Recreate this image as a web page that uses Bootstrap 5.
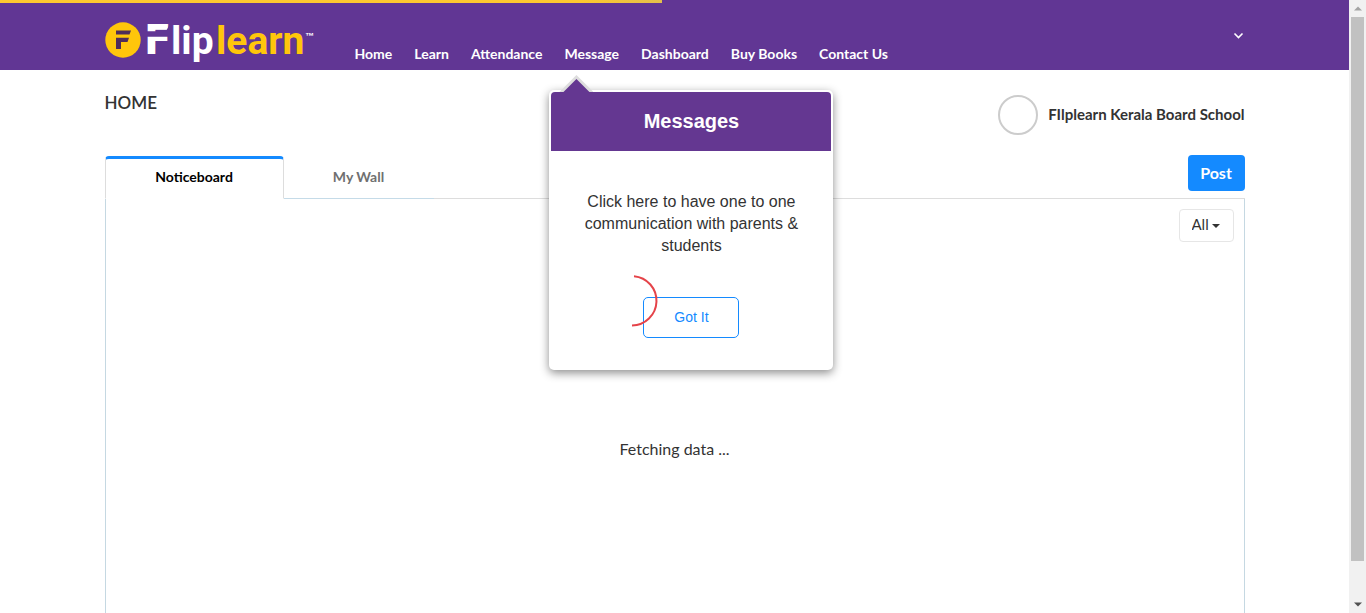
<!DOCTYPE html>
<html lang="en">
<head>
<meta charset="utf-8">
<meta name="viewport" content="width=device-width, initial-scale=1">
<title>Fliplearn</title>
<link href="https://cdn.jsdelivr.net/npm/bootstrap@5.3.0/dist/css/bootstrap.min.css" rel="stylesheet">
<style>
  body { font-family: Lato, "Liberation Sans", sans-serif; color: #333; background: #fff; }
  .page-area { min-width: 0; }
  .top-header { background: #613694; height: 70px; }
  .load-bar { height: 3px; background: #fdc82f; }
  .load-bar span { display: block; width: 80px; height: 3px; background: linear-gradient(90deg, #fdc82f, #e3c04c); }
  .brand-logo { width: 212px; height: 54px; display: block; overflow: visible; }
  .main-menu { gap: 22px; margin-left: 38px; padding-top: 44px; }
  .main-menu .nav-link { color: #fff; font-size: 14px; font-weight: 700; line-height: 20px; padding: 0; white-space: nowrap; }
  .user-toggle { background: none; border: 0; padding: 0; margin: 29px 1px 0 auto; width: 11px; height: 14px; line-height: 0; align-self: flex-start; }
  .page-title { font-size: 17px; line-height: 24px; font-weight: 600; margin: 21px 0 0; }
  .school-box { gap: 10px; padding: 25px 0 20px; }
  .avatar { width: 40px; height: 40px; border: 2px solid #ccc; border-radius: 50%; }
  .school-name { font-size: 15px; line-height: 20px; font-weight: 700; padding-top: 9px; }
  .board-tabs { border-bottom: 1px solid #ddd; height: 44px; }
  .board-tabs .nav-link { box-sizing: border-box; width: 150px; height: 44px; padding: 12px 0 11px; font-size: 14px; line-height: 20px; font-weight: 700; color: #707070; text-align: center; border: 0; border-bottom: 1px solid #c5dbe8; border-radius: 0; }
  .board-tabs .nav-link.active { color: #000; width: 179px; height: 43px; margin-top: 1px; padding: 8px 0 11px; border: 1px solid #ddd; border-top: 3px solid #148aff; border-bottom-color: #fff; border-radius: 4px 4px 0 0; }
  .btn-post, .btn-post:hover { background: #148aff; color: #fff; font-size: 16px; line-height: 24px; font-weight: 700; padding: 5px 0; border-radius: 4px; width: 57px; height: 36px; }
  .board-panel { border: solid #c5d8e2; border-width: 0 1px; min-height: 450px; padding: 10px; }
  .filter-select { width: 55px; height: 33px; border: 1px solid #e6e6e6; border-radius: 4px; padding: 0 12px 2px; font-size: 15px; line-height: 29px; color: #333;
    background-image: url("data:image/svg+xml,%3Csvg xmlns='http://www.w3.org/2000/svg' viewBox='0 0 8 4'%3E%3Cpath d='M0 0h8L4 4z' fill='%23333'/%3E%3C/svg%3E"); background-size: 8px 4px; background-position: right 13px center; }
  .fetching { font-size: 16px; line-height: 24px; margin-top: 195px; }
  .spinner-arc { position: absolute; z-index: 30; top: 75px; left: calc(50% - 69px); width: 54px; height: 54px; }
  .tour-pop { position: absolute; z-index: 20; top: 46px; left: -15px; width: 284px; border-radius: 5px; padding: 2px; background: #fff; box-shadow: 0 3px 10px rgba(0,0,0,.45); font-family: "Liberation Sans", Arial, sans-serif; text-align: center; }
  .tour-pop::before { content: ""; position: absolute; top: -15px; left: 10px; width: 34px; height: 17px; background: #ddd; clip-path: polygon(50% 0, 100% 100%, 0 100%); }
  .tour-pop::after { content: ""; position: absolute; top: -11px; left: 13px; width: 28px; height: 14px; background: #643791; clip-path: polygon(50% 0, 100% 100%, 0 100%); }
  .tour-head { background: #643791; color: #fff; font-size: 20px; line-height: 24px; font-weight: 700; padding: 17px 0 18px; margin: 0; border-radius: 4px 4px 0 0; }
  .tour-text { font-size: 16px; line-height: 22px; color: #333; margin: 0; padding: 40px 30px; }
  .btn-got { border: 1px solid #148aff; border-radius: 5px; color: #148aff; font-size: 14px; line-height: 21px; padding: 9px 0; width: 96px; height: 41px; margin-bottom: 30px; background: #fff; }
  .side-scroll { width: 17px; background: #f1f1f1; }
  .side-scroll svg { width: 17px; height: 17px; display: block; flex: none; }
  .side-thumb { background: #c1c1c1; height: 94%; margin: 0 2px; }
</style>
</head>
<body>
<div class="d-flex vh-100 overflow-hidden">
  <div class="page-area flex-grow-1 overflow-hidden position-relative">
    <header class="top-header">
      <div class="load-bar position-absolute top-0 start-0 d-flex justify-content-end" style="width:49.1%"><span></span></div>
      <div class="container p-0 d-flex align-items-start">
        <a href="#" class="mt-3" aria-label="Fliplearn home">
          <svg class="brand-logo" viewBox="0 -4 212 54" font-family="Roboto, sans-serif" font-weight="700">
            <circle cx="18" cy="20" r="17.700" fill="#ffc60b"/>
            <path d="M11 10.500h15l-1.500 4H11zM11 17.800h13l-1.500 4.200H16v7h-5z" fill="#4f2c5a"/>
            <text x="39" y="34" font-size="40" font-family="DejaVu Sans, sans-serif" fill="#fff">F</text>
            <path d="M40 11.200h24v5.500H40zM65 4v8h-4.500z" fill="#613694"/>
            <text x="66" y="34" font-size="39" fill="#fff">lip</text>
            <text x="111" y="34" font-size="39" fill="#ffc60b">learn</text>
            <text x="200" y="19" font-size="9" font-family="Liberation Sans, sans-serif" fill="#fff">™</text>
          </svg>
        </a>
        <nav>
          <ul class="nav main-menu flex-nowrap">
            <li><a class="nav-link" href="#">Home</a></li>
            <li><a class="nav-link" href="#">Learn</a></li>
            <li><a class="nav-link" href="#">Attendance</a></li>
            <li class="position-relative"><a class="nav-link" href="#">Message</a>
              <div class="tour-pop" role="dialog" aria-labelledby="tourTitle">
                <h2 class="tour-head" id="tourTitle">Messages</h2>
                <p class="tour-text">Click here to have one to one communication with parents &amp; students</p>
                <button type="button" class="btn btn-got">Got It</button>
              </div>
            </li>
            <li><a class="nav-link" href="#">Dashboard</a></li>
            <li><a class="nav-link" href="#">Buy Books</a></li>
            <li><a class="nav-link" href="#">Contact Us</a></li>
          </ul>
        </nav>
        <button type="button" class="user-toggle" aria-label="Account menu">
          <svg width="11" height="14" viewBox="0 0 11 14"><path d="M1.500 4.500l4 4 4-4" fill="none" stroke="#fff" stroke-width="1.600"/></svg>
        </button>
      </div>
    </header>
    <main class="container p-0">
      <div class="d-flex justify-content-between">
        <h1 class="page-title">HOME</h1>
        <div class="d-flex school-box">
          <div class="avatar"></div>
          <div class="school-name">FIlplearn Kerala Board School</div>
        </div>
      </div>
      <div class="d-flex board-tabs justify-content-between">
        <div class="d-flex">
          <a class="nav-link active" href="#" aria-current="page">Noticeboard</a>
          <a class="nav-link" href="#">My Wall</a>
        </div>
        <button type="button" class="btn btn-post">Post</button>
      </div>
      <section class="board-panel position-relative">
        <div class="d-flex justify-content-end">
          <select class="form-select filter-select" aria-label="Filter notices"><option>All</option></select>
        </div>
        <svg class="spinner-arc" viewBox="0 0 54 54"><path d="M28 2.200A24.700 24.700 0 0 1 26 51.500" fill="none" stroke="#e54349" stroke-width="2"/></svg>
        <p class="fetching text-center">Fetching data ...</p>
      </section>
    </main>
  </div>
  <div class="side-scroll d-flex flex-column flex-shrink-0" aria-hidden="true">
    <svg viewBox="0 0 17 17"><path d="M5 10.500h8L9 6.500z" fill="#a3a3a3"/></svg>
    <div class="flex-grow-1"><div class="side-thumb"></div></div>
    <svg viewBox="0 0 17 17"><path d="M5 6.500h8L9 10.500z" fill="#505050"/></svg>
  </div>
</div>
<script src="https://cdn.jsdelivr.net/npm/bootstrap@5.3.0/dist/js/bootstrap.bundle.min.js"></script>
</body>
</html>
